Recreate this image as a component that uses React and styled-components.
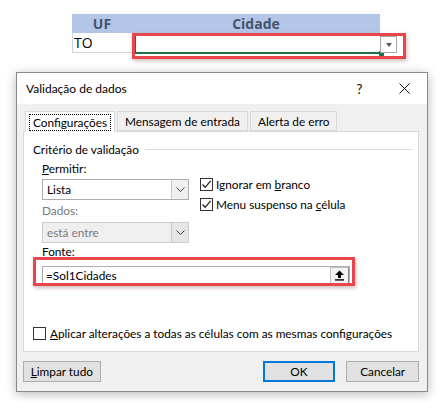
import React from "react";
import styled, { createGlobalStyle } from "styled-components";

const GlobalStyle = createGlobalStyle`
  html, body {
    margin: 0;
    padding: 0;
    background: #ffffff;
  }
  body {
    font-family: Lato, "Noto Sans", sans-serif;
    font-size: 11.8px;
    color: #000000;
  }
`;

const Page = styled.div`
  width: 445px;
  height: 402px;
  overflow: hidden;
  position: relative;
  background: #ffffff;
`;

/* ---------- planilha ---------- */

const Sheet = styled.div`
  display: grid;
  grid-template-columns: 60px 248px;
  grid-template-rows: 19px 20px;
  margin: 14px 0 0 72px;
  width: 308px;
  font-family: "Open Sans", "Liberation Sans", sans-serif;
`;

const HeadCell = styled.div`
  background: #b4c6e7;
  color: #44546a;
  font-weight: 700;
  font-size: 14px;
  display: flex;
  align-items: center;
  justify-content: center;
`;

const Cell = styled.div`
  position: relative;
  border-bottom: 1px solid #d4d4d4;
  border-left: ${(p) => (p.$first ? "1px solid #d4d4d4" : "none")};
  font-size: 14px;
  display: flex;
  align-items: center;
  padding-left: 1px;
`;

const Selection = styled.div`
  position: absolute;
  left: 2px;
  top: 1px;
  right: -1px;
  bottom: -2px;
  border-left: 2px solid #217346;
  border-bottom: 2px solid #217346;
  &::after {
    content: "";
    position: absolute;
    right: -3px;
    bottom: -4px;
    width: 5px;
    height: 5px;
    background: #217346;
  }
`;

const DropButton = styled.div`
  position: absolute;
  left: 248px;
  top: 3px;
  width: 15px;
  height: 15px;
  border: 1px solid #a6a6a6;
  background: #ffffff;
  display: flex;
  align-items: center;
  justify-content: center;
  &::after {
    content: "";
    border-left: 3.5px solid transparent;
    border-right: 3.5px solid transparent;
    border-top: 4px solid #595959;
  }
`;

const RedFrame = styled.div`
  position: absolute;
  left: ${(p) => p.$left}px;
  top: ${(p) => p.$top}px;
  width: ${(p) => p.$width}px;
  height: ${(p) => p.$height}px;
  border: 3px solid #e8464b;
  box-shadow: 1px 2px 4px rgba(120, 60, 60, 0.35);
  pointer-events: none;
  z-index: 3;
`;

/* ---------- diálogo ---------- */

const Dialog = styled.div`
  margin: 19px 0 0 16px;
  width: 410px;
  height: 318px;
  border: 1px solid #8a8a8a;
  background: #f0f0f0;
  box-shadow: 0 2px 10px rgba(0, 0, 0, 0.28);
  display: flex;
  flex-direction: column;
`;

const TitleBar = styled.div`
  height: 31px;
  background: #ffffff;
  display: flex;
  align-items: center;
  padding-left: 9px;
  font-size: 12px;
`;

const Title = styled.div`
  flex: 1;
`;

const TitleButton = styled.div`
  width: 45px;
  height: 31px;
  display: flex;
  align-items: center;
  justify-content: center;
  font-size: 13px;
`;

const Body = styled.div`
  flex: 1;
  display: flex;
  flex-direction: column;
  padding: 8px 8px 9px 6px;
`;

const Tabs = styled.div`
  display: flex;
  align-items: flex-end;
  padding-left: 2px;
  height: 19px;
  position: relative;
  z-index: 1;
`;

const Tab = styled.div`
  height: ${(p) => (p.$active ? "20px" : "18px")};
  margin-right: 2px;
  padding: 0 ${(p) => (p.$active ? "4px" : "7px")};
  background: ${(p) => (p.$active ? "#ffffff" : "#f0f0f0")};
  border: 1px solid #d9d9d9;
  border-bottom: ${(p) => (p.$active ? "none" : "1px solid #d9d9d9")};
  display: flex;
  align-items: center;
  margin-bottom: ${(p) => (p.$active ? "-1px" : "0")};
`;

const FocusText = styled.span`
  outline: 1px dotted #000000;
  padding: 0 3px;
  line-height: 15px;
`;

const Panel = styled.div`
  height: 221px;
  background: #ffffff;
  border: 1px solid #d9d9d9;
  display: flex;
  flex-direction: column;
  padding: 9px 0 0 9px;
  box-sizing: border-box;
`;

const GroupLabel = styled.div`
  display: flex;
  align-items: center;
  gap: 6px;
  height: 16px;
  margin-right: 6px;
  &::after {
    content: "";
    flex: 1;
    height: 1px;
    background: #dcdcdc;
  }
`;

const Fields = styled.div`
  padding-left: 9px;
  display: flex;
  flex-direction: column;
`;

const Label = styled.div`
  height: 16px;
  line-height: 16px;
  margin-top: ${(p) => p.$mt || 0}px;
  color: ${(p) => (p.$disabled ? "#7a7a7a" : "#000000")};
`;

const Row = styled.div`
  display: flex;
  gap: 11px;
`;

const Select = styled.div`
  width: 147px;
  height: 21px;
  box-sizing: border-box;
  border: 1px solid ${(p) => (p.$disabled ? "#cccccc" : "#adadad")};
  background: ${(p) => (p.$disabled ? "#efefef" : "#ffffff")};
  color: ${(p) => (p.$disabled ? "#7a7a7a" : "#000000")};
  display: flex;
  align-items: center;
  margin-top: ${(p) => p.$mt || 0}px;
`;

const SelectText = styled.div`
  flex: 1;
  padding-left: 4px;
`;

const SelectArrow = styled.div`
  width: 16px;
  height: 19px;
  border-left: 1px solid #c8c8c8;
  background: ${(p) => (p.$disabled ? "#e6e6e6" : "#f0f0f0")};
  display: flex;
  align-items: center;
  justify-content: center;
`;

const Checks = styled.div`
  display: flex;
  flex-direction: column;
  gap: 5px;
`;

const CheckRow = styled.div`
  display: flex;
  align-items: center;
  gap: 3px;
  height: 15px;
`;

const Box = styled.span`
  width: 13px;
  height: 13px;
  flex: none;
  box-sizing: border-box;
  border: 1px solid #333333;
  background: #ffffff;
  display: flex;
  align-items: center;
  justify-content: center;
`;

const U = styled.span`
  text-decoration: underline;
`;

const SourceWrap = styled.div`
  margin-top: 6px;
  width: 308px;
`;

const SourceInput = styled.div`
  height: 19px;
  box-sizing: border-box;
  border: 1px solid #adadad;
  display: flex;
  align-items: center;
  background: #ffffff;
`;

const SourceText = styled.div`
  flex: 1;
  padding-left: 3px;
`;

const RefButton = styled.div`
  width: 19px;
  height: 17px;
  box-sizing: border-box;
  border: 1px solid #c0c0c0;
  border-right-color: #8a8a8a;
  border-bottom-color: #8a8a8a;
  background: #f3f3f3;
  display: flex;
  align-items: center;
  justify-content: center;
`;

const ApplyRow = styled(CheckRow)`
  margin-top: auto;
  margin-bottom: 10px;
  gap: 4px;
  white-space: nowrap;
`;

const Buttons = styled.div`
  display: flex;
  margin-top: 9px;
`;

const Button = styled.div`
  width: ${(p) => p.$w}px;
  height: 21px;
  box-sizing: border-box;
  border: ${(p) => (p.$primary ? "2px solid #0078d7" : "1px solid #adadad")};
  background: #e1e1e1;
  display: flex;
  align-items: center;
  justify-content: center;
  margin-left: ${(p) => p.$ml || 0}px;
`;

const Chevron = () => (
  <svg width="9" height="6" viewBox="0 0 9 6">
    <path d="M0.5 0.5 L4.5 4.5 L8.5 0.5" fill="none" stroke="#444" strokeWidth="1" />
  </svg>
);

const Tick = () => (
  <svg width="11" height="11" viewBox="0 0 11 11">
    <path d="M1.5 5.5 L4.2 8.3 L9.6 1.8" fill="none" stroke="#222" strokeWidth="1.3" />
  </svg>
);

const CloseIcon = () => (
  <svg width="11" height="11" viewBox="0 0 11 11">
    <path d="M0.5 0.5 L10.5 10.5 M10.5 0.5 L0.5 10.5" stroke="#111" strokeWidth="1" />
  </svg>
);

const UpArrow = () => (
  <svg width="11" height="11" viewBox="0 0 11 11">
    <path d="M5.5 0.5 L10 5 L7 5 L7 8 L4 8 L4 5 L1 5 Z" fill="#000" />
    <rect x="1" y="9.2" width="9" height="1.4" fill="#000" />
  </svg>
);

const App = () => {
  return (
    <Page>
      <GlobalStyle />
      <Sheet>
        <HeadCell>UF</HeadCell>
        <HeadCell>Cidade</HeadCell>
        <Cell $first>TO</Cell>
        <Cell>
          <Selection />
          <DropButton />
        </Cell>
      </Sheet>
      <RedFrame $left={132} $top={33} $width={268} $height={20} />

      <Dialog>
        <TitleBar>
          <Title>Validação de dados</Title>
          <TitleButton>?</TitleButton>
          <TitleButton>
            <CloseIcon />
          </TitleButton>
        </TitleBar>
        <Body>
          <Tabs>
            <Tab $active>
              <FocusText>Configurações</FocusText>
            </Tab>
            <Tab>Mensagem de entrada</Tab>
            <Tab>Alerta de erro</Tab>
          </Tabs>
          <Panel>
            <GroupLabel>Critério de validação</GroupLabel>
            <Fields>
              <Label $mt={4}>
                <U>P</U>ermitir:
              </Label>
              <Row>
                <div>
                  <Select $mt={2}>
                    <SelectText>Lista</SelectText>
                    <SelectArrow>
                      <Chevron />
                    </SelectArrow>
                  </Select>
                  <Label $mt={3} $disabled>
                    Dados:
                  </Label>
                  <Select $mt={3} $disabled>
                    <SelectText>está entre</SelectText>
                    <SelectArrow $disabled>
                      <Chevron />
                    </SelectArrow>
                  </Select>
                </div>
                <Checks>
                  <CheckRow>
                    <Box>
                      <Tick />
                    </Box>
                    <span>
                      Ignorar em <U>b</U>ranco
                    </span>
                  </CheckRow>
                  <CheckRow>
                    <Box>
                      <Tick />
                    </Box>
                    <span>
                      Menu suspenso na <U>c</U>élula
                    </span>
                  </CheckRow>
                </Checks>
              </Row>
              <Label $mt={1}>Fonte:</Label>
              <SourceWrap>
                <SourceInput>
                  <SourceText>=Sol1Cidades</SourceText>
                  <RefButton>
                    <UpArrow />
                  </RefButton>
                </SourceInput>
              </SourceWrap>
            </Fields>
            <ApplyRow>
              <Box />
              <span>
                <U>A</U>plicar alterações a todas as células com as mesmas configurações
              </span>
            </ApplyRow>
          </Panel>
          <Buttons>
            <Button $w={78}>
              <span>
                <U>L</U>impar tudo
              </span>
            </Button>
            <Button $w={73} $ml={162} $primary>
              OK
            </Button>
            <Button $w={73} $ml={11}>
              Cancelar
            </Button>
          </Buttons>
        </Body>
      </Dialog>
      <RedFrame $left={33} $top={257} $width={316} $height={23} />
    </Page>
  );
};

export default App;
